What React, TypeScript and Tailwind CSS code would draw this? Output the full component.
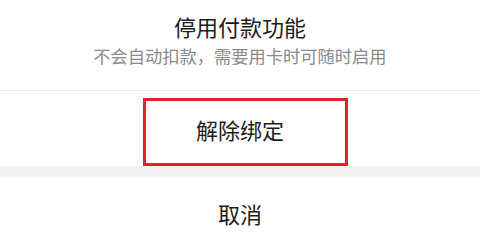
import React from "react";

export default function App() {
  const font = { fontFamily: '"Noto Sans CJK SC", "Noto Sans", sans-serif' };
  return (
    <div className="w-[480px] h-[238px] bg-white overflow-hidden flex flex-col" style={font}>
      <div className="h-[90px] flex flex-col items-center">
        <div className="mt-[11px] text-[22px] leading-[30px] text-[#1b1b1b]">停用付款功能</div>
        <div className="mt-[3px] text-[17.25px] leading-[24px] text-[#8a8a8a]">不会自动扣款，需要用卡时可随时启用</div>
      </div>
      <div className="h-px bg-[#e6e6e6]" />
      <div className="relative h-[75px] flex items-center justify-center">
        <span className="text-[22px] leading-[30px] text-[#1b1b1b]">解除绑定</span>
        <div className="absolute left-[143px] top-[7px] w-[205px] h-[68px] border-[3px] border-[#e0202a]" />
      </div>
      <div className="h-[11px] bg-[#f2f2f2]" />
      <div className="flex-1 flex items-start justify-center">
        <span className="mt-[21px] text-[22px] leading-[30px] text-[#1b1b1b]">取消</span>
      </div>
    </div>
  );
}
